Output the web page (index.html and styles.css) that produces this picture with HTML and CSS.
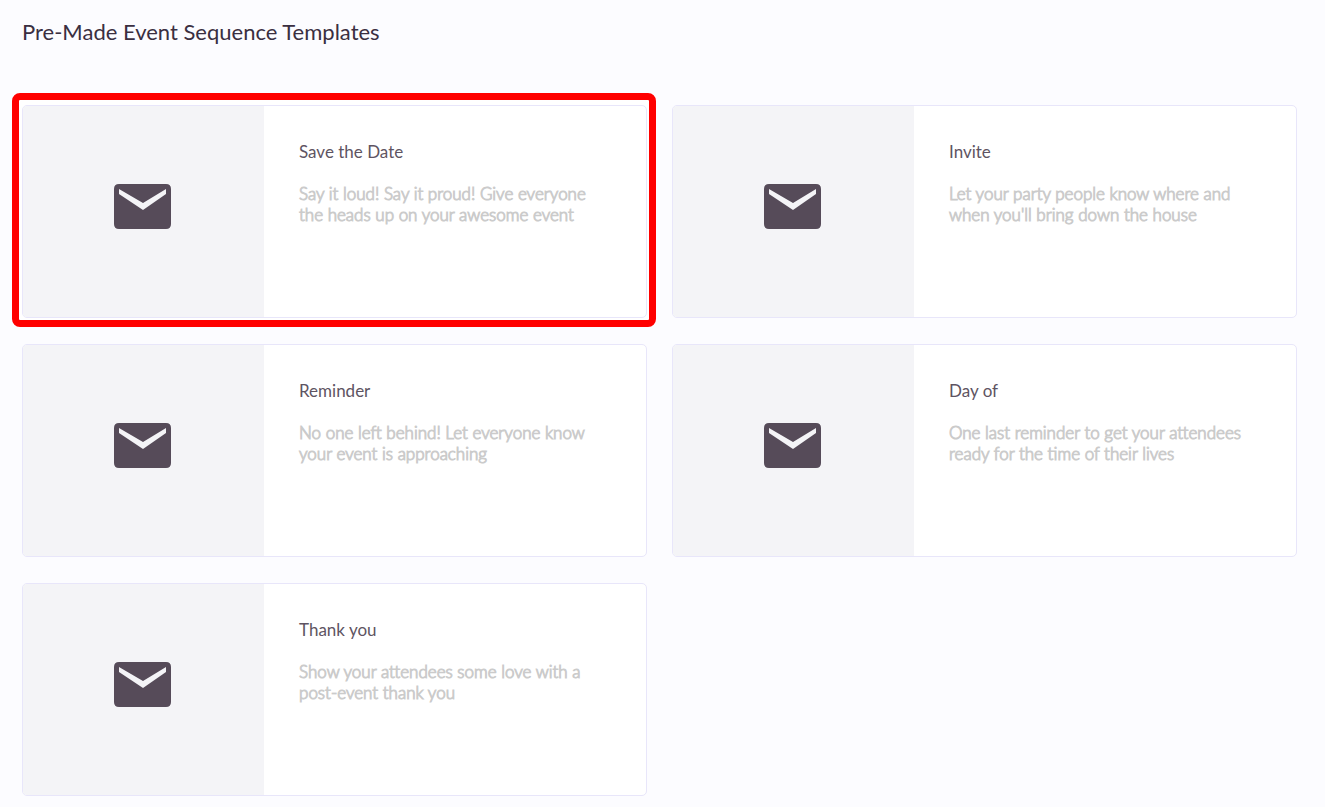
FILE: index.html
```
<!DOCTYPE html>
<html lang="en">
<head>
    <meta charset="UTF-8">
    <meta name="viewport" content="width=device-width, initial-scale=1.0">
    <title>Event Sequence Templates</title>
    <link rel="stylesheet" href="styles.css">
</head>
<body>
    <!-- Shared envelope icon -->
    <svg class="sprite" aria-hidden="true">
        <symbol id="mail" viewBox="0 0 57 45">
            <path fill-rule="evenodd" d="M5 0H52Q57 0 57 5V40Q57 45 52 45H5Q0 45 0 40V5Q0 0 5 0ZM5 5V10L29 26L52 10V5L29 19Z"/>
        </symbol>
    </svg>

    <main>
        <h1>Pre-Made Event Sequence Templates</h1>

        <section class="templates">
            <a class="card selected" href="#save-the-date">
                <div class="card-icon"><svg><use href="#mail"/></svg></div>
                <div class="card-body">
                    <h2>Save the Date</h2>
                    <p>Say it loud! Say it proud! Give everyone the heads up on your awesome event</p>
                </div>
            </a>
            <a class="card" href="#invite">
                <div class="card-icon"><svg><use href="#mail"/></svg></div>
                <div class="card-body">
                    <h2>Invite</h2>
                    <p>Let your party people know where and when you'll bring down the house</p>
                </div>
            </a>
            <a class="card" href="#reminder">
                <div class="card-icon"><svg><use href="#mail"/></svg></div>
                <div class="card-body">
                    <h2>Reminder</h2>
                    <p>No one left behind! Let everyone know your event is approaching</p>
                </div>
            </a>
            <a class="card" href="#day-of">
                <div class="card-icon"><svg><use href="#mail"/></svg></div>
                <div class="card-body">
                    <h2>Day of</h2>
                    <p>One last reminder to get your attendees ready for the time of their lives</p>
                </div>
            </a>
            <a class="card" href="#thank-you">
                <div class="card-icon"><svg><use href="#mail"/></svg></div>
                <div class="card-body">
                    <h2>Thank you</h2>
                    <p>Show your attendees some love with a post-event thank you</p>
                </div>
            </a>
        </section>
    </main>
</body>
</html>
```
FILE: styles.css
```
* {
    margin: 0;
    padding: 0;
    box-sizing: border-box;
}

body {
    background: #fcfcff;
    color: #3a2f41;
    font-family: 'Lato', sans-serif;
}

.sprite {
    display: none;
}

main {
    padding: 18px 28px 11px 22px;
}

h1 {
    font-size: 22px;
    font-weight: 400;
    line-height: 28px;
    margin-bottom: 59px;
}

/* Template cards */
.templates {
    display: grid;
    grid-template-columns: 1fr 1fr;
    gap: 26px 25px;
}

.card {
    position: relative;
    display: flex;
    min-height: 213px;
    background: #fff;
    border: 1px solid #e8e6fa;
    border-radius: 5px;
    color: #5e5462;
    text-decoration: none;
}

.card-icon {
    display: flex;
    align-items: center;
    justify-content: center;
    flex: 0 0 241px;
    padding: 0 2px 10px 0;
    background: #f4f4f7;
    border-radius: 4px 0 0 4px;
}

.card-icon svg {
    width: 57px;
    height: 45px;
    fill: #564b59;
}

.card-body {
    flex: 1;
    padding: 35px 48px 35px 35px;
}

.card h2 {
    font-size: 17px;
    font-weight: 400;
    line-height: 21px;
    margin-bottom: 21px;
}

.card p {
    color: #cbcbcb;
    font-size: 17px;
    font-weight: 300;
    line-height: 21px;
    -webkit-text-stroke: 1px #cbcbcb;
}

/* Highlight frame around the chosen template */
.selected::before {
    content: "";
    position: absolute;
    inset: -13px -10px -10px -11px;
    z-index: -1;
    background: #fff;
    border: 7px solid #f00;
    border-radius: 8px;
}
```
